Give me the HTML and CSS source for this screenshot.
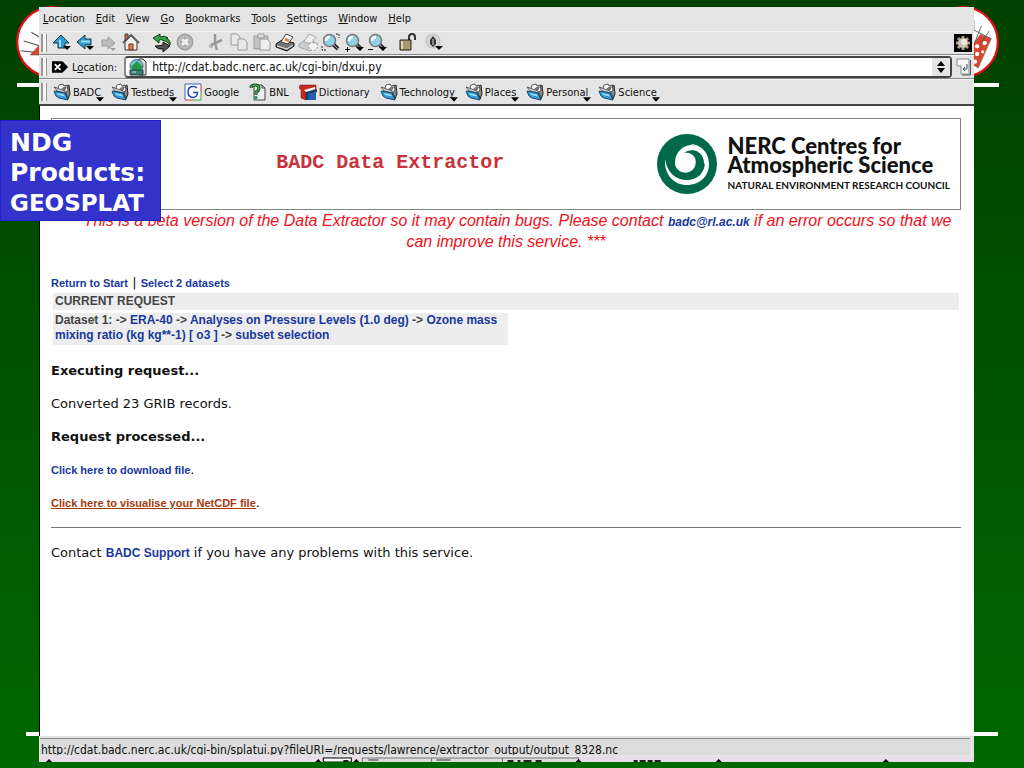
FILE: index.html
```
<!DOCTYPE html>
<html lang="en">
<head>
  <meta charset="UTF-8">
  <title>NDG Products: GEOSPLAT</title>
  <link rel="stylesheet" href="styles.css">
</head>
<body>
  <!-- shared icons -->
  <svg class="defs" aria-hidden="true">
    <symbol id="folder" viewBox="0 0 18 18">
      <path d="M10 5l6-3 1 9-2 5z" fill="#888" stroke="#222"/>
      <path d="M5 5l1-3 4-1 1 2 3-1 1 5-3 3-7-1z" fill="#fff" stroke="#333" stroke-width=".800"/>
      <path d="M8 6l4-3 2 1-2 4z" fill="#777"/>
      <path d="M1 4l3 1 8 3 3 8-2-6-9-2z" fill="#ccc" stroke="#444" stroke-width=".800"/>
      <path d="M1 8l11 2 3 7-9-2-3-2z" fill="#2f9bd8" stroke="#174a70"/>
      <path d="M4 10l7 1.500 1 2-7-1.500z" fill="#9adcf5"/>
    </symbol>
    <symbol id="lens" viewBox="0 0 20 20">
      <path d="M12 11l5 5" stroke="#333" stroke-width="4"/>
      <path d="M12 11l5 5" stroke="#999"/>
      <circle cx="8.500" cy="7.500" r="6" fill="#8fd0ea" stroke="#777" stroke-width="1.500"/>
      <path d="M5 8q0-4 4-4" fill="none" stroke="#fff" stroke-width="2.500"/>
    </symbol>
    <symbol id="arrow" viewBox="0 0 9 5"><path d="M0 0h9L4.500 5z" fill="#000"/></symbol>
  </svg>

  <div class="slide">
    <div class="rule rule-top"></div>
    <div class="rule rule-bottom"></div>
    <svg class="crest crest-left" viewBox="0 0 68 68">
      <circle cx="34" cy="34" r="32" fill="#fff" stroke="#e01010" stroke-width="2"/>
      <path d="M15 25l10 6M8 33l16 5M5 42l18 2" fill="none" stroke="#555"/>
      <path d="M14 46l9-10v10z" fill="#d8452c" stroke="#555" stroke-width=".500"/>
    </svg>
    <svg class="crest crest-right" viewBox="0 0 68 68">
      <circle cx="34" cy="34" r="32" fill="#fff" stroke="#e01010" stroke-width="2"/>
      <path d="M43 36l7-9 10 4-12 27-5-3z" fill="#d8452c" stroke="#777" stroke-width=".500"/>
      <path d="M44 14v10M51 19l-6 15M58 24l-9 13M42 22l18 9" fill="none" stroke="#555" stroke-width=".800"/>
      <g fill="#fff"><circle cx="47" cy="38" r="2"/><circle cx="54" cy="35" r="2"/><circle cx="47" cy="45" r="2"/><circle cx="52" cy="43" r="1.500"/><circle cx="45" cy="52" r="2"/></g>
    </svg>

    <div class="window">
      <nav class="menubar">
        <button><u>L</u>ocation</button>
        <button><u>E</u>dit</button>
        <button><u>V</u>iew</button>
        <button><u>G</u>o</button>
        <button><u>B</u>ookmarks</button>
        <button><u>T</u>ools</button>
        <button><u>S</u>ettings</button>
        <button><u>W</u>indow</button>
        <button><u>H</u>elp</button>
      </nav>

      <div class="bar toolbar">
        <span class="grip"></span>
        <button aria-label="Up"><svg viewBox="0 0 20 20"><path d="M9 2l8 8h-4v5H6v-5H1z" fill="#2f9bd8" stroke="#17354f"/><path d="M8 7v7" stroke="#9adcf5" stroke-width="2"/><path d="M11 13h8l-4 4z"/></svg></button>
        <button aria-label="Back"><svg viewBox="0 0 20 20"><path d="M2 9l8-7v4h6v6h-6v4z" fill="#2f9bd8" stroke="#17354f"/><path d="M6 8.500h9" stroke="#9adcf5" stroke-width="2"/><path d="M11 13h8l-4 4z"/></svg></button>
        <button aria-label="Forward"><svg viewBox="0 0 20 20"><path d="M17 10l-7-6v3H4v6h6v3z" fill="#bbb" stroke="#999"/><path d="M12 15h6l-3 3z" fill="#999"/></svg></button>
        <button aria-label="Home"><svg viewBox="0 0 20 20"><path d="M4 9v8h12V9l-6-6z" fill="#eee" stroke="#333"/><path d="M2 10l8-8 8 8" fill="none" stroke="#666" stroke-width="2"/><path d="M4 1h3v4L4 8z" fill="#c96a4a" stroke="#444"/><path d="M8 11h4v6H8z" fill="#e87a3c" stroke="#713010"/></svg></button>
        <button class="push" aria-label="Reload"><svg viewBox="0 0 20 20"><path d="M16 5q-3-3-8-1V1L1 5l6 5V7q2-1 3 0 6 1 8 5 1-5-4-7z" fill="#39a64a" stroke="#123b18"/><path d="M3 13q3 4 8 3v3l7-6-7-4v3q-4 1-8 1z" fill="#555" stroke="#111"/></svg></button>
        <button aria-label="Stop"><svg viewBox="0 0 20 20"><circle cx="10" cy="9" r="8" fill="#aaa" stroke="#999"/><circle cx="10" cy="9" r="6" fill="none" stroke="#ccc"/><path d="M7 6l6 6m0-6l-6 6" stroke="#eee" stroke-width="3"/></svg></button>
        <button class="push" aria-label="Cut"><svg viewBox="0 0 20 20"><path d="M9 1v9l2 7M16 7L5 12" fill="none" stroke="#999" stroke-width="2.500"/><circle cx="5" cy="13" r="1.500" fill="none" stroke="#999"/></svg></button>
        <button aria-label="Copy"><svg viewBox="0 0 20 20"><g fill="#e8e8e8" stroke="#999"><path d="M2 1h6l3 3v8H2z"/><path d="M9 6h6l3 3v8H9z"/></g></svg></button>
        <button aria-label="Paste"><svg viewBox="0 0 20 20"><path d="M2 3h14v13H2z" fill="#c4c4c4" stroke="#999"/><path d="M6 1h6v4H6z" fill="#ddd" stroke="#999"/><path d="M8 6h7l3 3v8H8z" fill="#eee" stroke="#999"/></svg></button>
        <button aria-label="Print"><svg viewBox="0 0 20 20"><path d="M1 11l6-4 12 3v3l-7 5-11-4z" fill="#777" stroke="#111"/><path d="M6 9l5-8 7 3-5 7z" fill="#fff" stroke="#444"/><path d="M10 6l4 2" stroke="#d8804a" stroke-width="3"/><path d="M2 13l10 3 6-4" fill="none" stroke="#eee"/></svg></button>
        <button aria-label="Print frame"><svg viewBox="0 0 20 20"><path d="M1 11l6-4 12 3v3l-7 5-11-4z" fill="#ccc" stroke="#aaa"/><path d="M6 9l5-8 7 3-5 7z" fill="#eee" stroke="#aaa"/><path d="M11 10h8v7h-8z" fill="#f4f4f4" stroke="#999" stroke-dasharray="2"/></svg></button>
        <button aria-label="Find"><svg viewBox="0 0 20 20"><use href="#lens"/><path d="M15 1h3v4M1 13v4h5" fill="none" stroke="#222" stroke-dasharray="2 1"/></svg></button>
        <button aria-label="Zoom in"><svg viewBox="0 0 20 20"><use href="#lens"/><path d="M1 16.500h5M3.500 14v5" stroke="#000"/><path d="M12 14h8l-4 4z"/></svg></button>
        <button aria-label="Zoom out"><svg viewBox="0 0 20 20"><use href="#lens"/><path d="M1 16.500h5" stroke="#000"/><path d="M12 14h8l-4 4z"/></svg></button>
        <button class="push" aria-label="Security"><svg viewBox="0 0 20 20"><path d="M11 7V4q0-3 3-3t3 3v3" fill="none" stroke="#333" stroke-width="2"/><path d="M2 7h11v10H2z" fill="#a59a70" stroke="#222"/><path d="M4 8v8" stroke="#e0d8b0" stroke-width="2"/></svg></button>
        <button class="push-sm" aria-label="Encoding"><svg viewBox="0 0 20 20"><circle cx="8" cy="8" r="7" fill="#d4d4d4" stroke="#bbb"/><path d="M8 3l3 4v4l-3 3-3-3V7z" fill="#333"/><path d="M8 6v6" stroke="#ddd"/><path d="M10 13h8l-4 4z"/></svg></button>
        <svg class="gear" viewBox="0 0 18 18"><path d="M0 0h18v18H0z"/><path d="M9 2v14M2 9h14M4 4l10 10M14 4L4 14" stroke="#a8a090" stroke-width="3"/><circle cx="9" cy="9" r="5" fill="#c8c0b0"/><circle cx="10" cy="8" r="3" fill="#f2e6e0"/></svg>
      </div>

      <form class="bar locationbar">
        <span class="grip"></span>
        <button type="reset" aria-label="Clear location"><svg class="clear" viewBox="0 0 18 12"><path d="M0 0h11l6 6-6 6H0z"/><path d="M3 3l6 6m0-6L3 9" stroke="#fff" stroke-width="2"/></svg></button>
        <label for="url">L<u>o</u>cation:</label>
        <div class="combo">
          <svg class="site" viewBox="0 0 18 18"><path d="M10 1h4l3 3v13h-7z" fill="#ddd" stroke="#333"/><circle cx="7.500" cy="8" r="6.500" fill="#6cc4e0" stroke="#567"/><path d="M2 9l6-6 6 6-3 3H4z" fill="#279646"/><path d="M1 12h13v5H1z" fill="#3a7f78" stroke="#244"/><path d="M3 14h4" stroke="#bde"/></svg>
          <input id="url" type="text" value="http://cdat.badc.nerc.ac.uk/cgi-bin/dxui.py">
          <button type="button" class="spin" aria-label="Show history"><svg viewBox="0 0 10 12"><path d="M1 5l4-5 4 5zM1 7l4 5 4-5z"/></svg></button>
        </div>
        <button aria-label="Go"><svg class="go" viewBox="0 0 16 18"><path d="M1 1h12v15H5V8H1z" fill="#f6f6f6" stroke="#888"/><path d="M14.500 2v15H6" fill="none" stroke="#555"/><path d="M11 6v5H7m2-2l-2 2 2 2" fill="none" stroke="#265e70"/></svg></button>
      </form>

      <nav class="bar bookmarks">
        <span class="grip"></span>
        <button class="mark"><svg><use href="#folder"/></svg>BADC<svg class="more"><use href="#arrow"/></svg></button>
        <button class="mark"><svg><use href="#folder"/></svg>Testbeds<svg class="more"><use href="#arrow"/></svg></button>
        <a class="mark" href="#"><svg viewBox="0 0 18 18"><path d="M1 1h16v16H1z" fill="#fff"/><path d="M1 17V1h16" fill="none" stroke="#36c"/><path d="M17 1v8M1 17h8" stroke="#c33"/><path d="M17 9v8H9" fill="none" stroke="#3a4"/><path d="M13 5Q11 3 8.500 3.500 4 4 4 9t5 5.500q4 0 4.500-5H9" fill="none" stroke="#2444c8" stroke-width="1.500"/></svg>Google</a>
        <a class="mark" href="#"><svg viewBox="0 0 18 18"><path d="M5 2h8l3 3v12H5z" fill="#eee" stroke="#444"/><path d="M13 2v3h3" fill="none" stroke="#444"/><path d="M2 5q0-3 4-3t4 3-3 4v3" fill="none" stroke="#185c24" stroke-width="3"/><path d="M2 5q0-3 4-3t4 3-3 4v3" fill="none" stroke="#4fb95f"/><circle cx="7" cy="14.500" r="1.500" fill="#238138"/></svg>BNL</a>
        <a class="mark" href="#"><svg viewBox="0 0 18 18"><path d="M1 2h16v4L7 8v9l-5-2V7L0 5z" fill="#c22a1c" stroke="#711" stroke-width=".500"/><path d="M5 7l11-3v2L7 9z" fill="#fff"/><path d="M7 9l11-3v3l-8 2v6H7z" fill="#123a70"/><path d="M9 11l8-2v8H9z" fill="#2160b0"/></svg>Dictionary</a>
        <button class="mark"><svg><use href="#folder"/></svg>Technology<svg class="more"><use href="#arrow"/></svg></button>
        <button class="mark"><svg><use href="#folder"/></svg>Places<svg class="more"><use href="#arrow"/></svg></button>
        <button class="mark"><svg><use href="#folder"/></svg>Personal<svg class="more"><use href="#arrow"/></svg></button>
        <button class="mark"><svg><use href="#folder"/></svg>Science<svg class="more"><use href="#arrow"/></svg></button>
      </nav>

      <main class="page">
        <header class="banner">
          <h1>BADC Data Extractor</h1>
          <div class="nerc">
            <svg viewBox="0 0 60 60">
              <circle cx="30" cy="30" r="30" fill="#00694a"/>
              <path d="M8 25C7 41 17 51 30 51c13 0 22-9 22-21 0-11-8-20-19-20 9 2 15 9 15 18 0 11-8 18-18 18C18 46 10 38 8 25z" fill="#fff"/>
              <path d="M18 29c0-11 8-18 17-18 10 1 15 9 15 18l-3 1c0-7-4-12-10-12 2 2 3 5 3 9 0 7-5 12-11 12s-11-4-11-10z" fill="#fff"/>
              <path d="M27 19c5-4 14-4 18 3 4 8 1 17-7 20-9 3-18 0-20-10 3 6 9 8 14 6 6-2 8-9 6-14-2-4-6-6-11-5z" fill="#00694a"/>
            </svg>
            <div>
              <p class="nerc-name">NERC Centres for<br>Atmospheric Science</p>
              <p class="nerc-sub">NATURAL ENVIRONMENT RESEARCH COUNCIL</p>
            </div>
          </div>
        </header>

        <p class="warning">*** This is a beta version of the Data Extractor so it may contain bugs. Please contact <a href="#">badc@rl.ac.uk</a> if an error occurs so that we can improve this service. ***</p>

        <p class="trail"><a href="#">Return to Start</a> | <a href="#">Select 2 datasets</a></p>
        <h2 class="request-title">CURRENT REQUEST</h2>
        <p class="request">Dataset 1: -&gt; <a href="#">ERA-40</a> -&gt; <a href="#">Analyses on Pressure Levels (1.0 deg)</a> -&gt; <a href="#">Ozone mass mixing ratio (kg kg**-1) [ o3 ]</a> -&gt; <a href="#">subset selection</a></p>

        <p><b>Executing request...</b></p>
        <p>Converted 23 GRIB records.</p>
        <p><b>Request processed...</b></p>
        <p class="result"><a href="#">Click here to download file</a>.</p>
        <p class="result"><a class="active" href="#">Click here to visualise your NetCDF file</a>.</p>
        <hr>
        <p>Contact <a href="#">BADC Support</a> if you have any problems with this service.</p>
      </main>

      <footer class="status"><span>http://cdat.badc.nerc.ac.uk/cgi-bin/splatui.py?fileURI=/requests/lawrence/extractor_output/output_8328.nc</span></footer>
      <!-- top edge of the desktop panel -->
      <div class="panel">
        <svg viewBox="0 0 934 5" preserveAspectRatio="xMinYMin slice">
          <path d="M284 5V1h28v4z" fill="#fff" stroke="#000"/>
          <path d="M323 5V1h216v4M392 1v4M463 1v4" fill="#ddd" stroke="#777"/>
          <path d="M329 3h10M397 3h14" stroke="#888" stroke-width="2"/>
          <path d="M7 5l3-3 3 3zM276 5l3-3 3 3zM314 5l3-3 3 3zM536 5l3-3 3 3zM676 5l3-3 3 3zM843 5l3-3 3 3z"/>
          <path d="M304 4h5M468 4h6m4 0h3m3 0h8m4 0h6M594 4h4m2 0h6m2 0h5m2 0h6" stroke="#222" stroke-width="2"/>
        </svg>
      </div>
    </div>

    <div class="caption">NDG<br>Products:<br><span>GEOSPLAT</span></div>
  </div>
</body>
</html>
```
FILE: styles.css
```
* {
  margin: 0;
  padding: 0;
  box-sizing: border-box;
}
body {
  font-family: 'DejaVu Sans', Verdana, sans-serif;
  font-size: 13px;
  color: #111;
}
.defs {
  display: none;
}
svg {
  display: block;
}
a {
  color: #17399b;
  text-decoration: none;
}
button {
  background: none;
  border: 0;
  font: inherit;
  color: inherit;
}
.slide {
  position: relative;
  display: flex;
  min-height: 100vh;
  padding: 7px 50px 6px 39px;
  background: linear-gradient(#004000, #006800);
}

/* slide decoration, behind the browser window */
.rule {
  position: absolute;
  height: 4px;
  background: #fff;
}
.rule-top {
  top: 83px;
  left: 17px;
  right: 25px;
}
.rule-bottom {
  bottom: 32px;
  left: 26px;
  right: 26px;
}
.crest {
  position: absolute;
  top: 5px;
  width: 74px;
  height: 74px;
}
.crest-left {
  left: 15px;
}
.crest-right {
  right: 24px;
}

/* browser window */
.window {
  position: relative;
  flex: 1;
  min-width: 0;
  display: flex;
  flex-direction: column;
  background: #e4e4e4;
  font-family: 'DejaVu Sans Condensed', 'DejaVu Sans', sans-serif;
  font-size: 11px;
}
.menubar {
  display: flex;
  align-items: center;
  gap: 11px;
  height: 24px;
  padding: 0 4px 2px;
}
.bar {
  display: flex;
  align-items: center;
  height: 24px;
  padding: 0 2px;
  border-top: 1px solid #f4f4f4;
  border-bottom: 1px solid #888;
}
.grip {
  width: 6px;
  height: 18px;
  margin-right: 5px;
  border: solid #999;
  border-width: 0 1px 0 2px;
  background: #f4f4f4;
}
.toolbar {
  gap: 3px;
}
.toolbar .grip {
  margin-right: 2px;
}
.toolbar svg {
  width: 20px;
  height: 20px;
}
.toolbar .push {
  margin-left: 8px;
}
.toolbar .push-sm {
  margin-left: 4px;
}
.toolbar .gear {
  width: 18px;
  height: 18px;
  margin-left: auto;
}
.locationbar .clear {
  width: 17px;
  height: 12px;
}
.locationbar label {
  margin: 0 7px 0 3px;
}
.combo {
  flex: 1;
  display: flex;
  align-items: center;
  height: 22px;
  padding-left: 3px;
  margin-right: 4px;
  border: 2px solid #444;
  border-left-color: #888;
  border-radius: 4px;
  background: #fff;
}
.site {
  width: 18px;
  height: 18px;
}
.combo input {
  flex: 1;
  min-width: 0;
  padding-left: 5px;
  border: 0;
  outline: 0;
  background: none;
  font: inherit;
  font-size: 12px;
  color: inherit;
}
.spin {
  align-self: stretch;
  padding: 0 4px;
  background: #e4e4e4;
}
.spin svg {
  width: 10px;
  height: 12px;
}
.go {
  width: 16px;
  height: 18px;
}
.bookmarks {
  gap: 10px;
  height: 27px;
  border-bottom: 2px solid #444;
}
.bookmarks .grip {
  margin-right: -4px;
}
.mark {
  position: relative;
  display: flex;
  align-items: center;
  gap: 2px;
  color: #111;
}
.mark svg {
  width: 18px;
  height: 18px;
}
.mark .more {
  position: absolute;
  right: -3px;
  bottom: -1px;
  width: 8px;
  height: 5px;
}

/* web page */
.page {
  flex: 1;
  padding: 12px 13px 0 11px;
  border-left: 1px solid #000;
  background: #fff;
  font-family: 'DejaVu Sans', Verdana, sans-serif;
  font-size: 13px;
  line-height: 17px;
}
.page a {
  font-family: 'Liberation Sans', Arial, sans-serif;
  font-size: 12px;
  font-weight: bold;
  line-height: 1;
}
.page .trail a,
.page .result a {
  font-size: 11px;
}
.page > p {
  margin-bottom: 16px;
}
.banner {
  display: flex;
  align-items: center;
  height: 92px;
  padding: 0 10px 0 72px;
  border: 1px solid #7b877b;
}
.banner h1 {
  flex: 1;
  padding-bottom: 4px;
  font-family: 'Liberation Mono', 'Courier New', monospace;
  font-size: 20px;
  font-weight: bold;
  color: #c8323c;
  text-align: center;
}
.nerc {
  display: flex;
  align-items: center;
  gap: 11px;
  font-family: Lato, sans-serif;
  color: #111;
}
.nerc svg {
  width: 60px;
  height: 60px;
}
.nerc-name {
  font-size: 22px;
  font-weight: 900;
  line-height: 19px;
}
.nerc-sub {
  margin-top: 4px;
  font-size: 10px;
  font-weight: 700;
  line-height: 14px;
}
.page .warning {
  margin-bottom: 22px;
  font-family: 'Liberation Sans', Arial, sans-serif;
  font-size: 16px;
  font-style: italic;
  line-height: 21px;
  color: #f01020;
  text-align: center;
}
.page .trail {
  margin-bottom: 2px;
}
.request-title,
.page .request {
  margin: 0 2px 3px;
  padding: 0 2px;
  background: #ededed;
  font-family: 'Liberation Sans', Arial, sans-serif;
  font-size: 12px;
  font-weight: bold;
  color: #444;
}
.page .request {
  width: 50%;
  margin-bottom: 17px;
  line-height: 15px;
  padding-bottom: 2px;
}
.page .active {
  color: #a63a12;
  text-decoration: underline;
}
.page hr {
  margin: 0 0 16px;
  border: 0;
  border-top: 1px solid #777;
}

.status {
  height: 17px;
  margin: 2px 4px 2px 1px;
  overflow: hidden;
  border-top: 1px solid #888;
  background: #dcdcdc;
}
.status span {
  display: block;
  padding: 4px 0 0 1px;
  font-size: 12px;
  line-height: 14px;
}
.panel {
  height: 5px;
  overflow: hidden;
  background: #e8dce8;
}
.panel svg {
  width: 100%;
  height: 5px;
}

/* label box over the window */
.caption {
  position: absolute;
  top: 120px;
  left: 0;
  padding: 7px 15px 2px 9px;
  border: 1px solid #2222cc;
  background: #3333cc;
  color: #fff;
  font-size: 25px;
  font-weight: bold;
  line-height: 30px;
}
.caption span {
  font-size: 23px;
}
```
